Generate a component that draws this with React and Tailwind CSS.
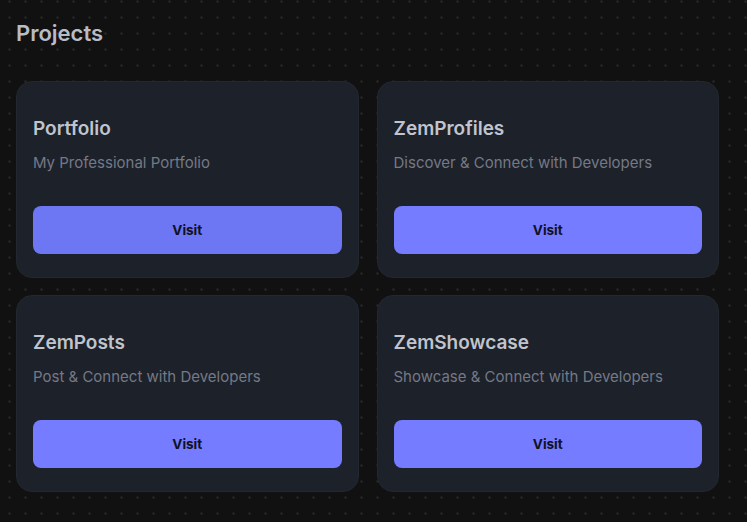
const projects = [
  { name: "Portfolio", desc: "My Professional Portfolio", hover: true },
  { name: "ZemProfiles", desc: "Discover & Connect with Developers" },
  { name: "ZemPosts", desc: "Post & Connect with Developers" },
  { name: "ZemShowcase", desc: "Showcase & Connect with Developers" },
];

export default function App() {
  return (
    <div
      className="min-h-screen w-full bg-[#111111] bg-[radial-gradient(#2c2c2c_1px,transparent_1.2px)] bg-[length:16px_16px] bg-[position:1.5px_9.5px] px-4 pt-[19px] font-['Inter',sans-serif]"
    >
      <h1 className="text-[22px] font-semibold leading-[28px] text-[#b7bcc7]">Projects</h1>
      <div className="mt-[34px] grid w-[703px] grid-cols-2 gap-x-[18px] gap-y-[17px]">
        {projects.map((p) => (
          <div
            key={p.name}
            className="flex h-[197px] flex-col rounded-2xl border border-[#23272f] bg-[#1d2129] px-4 pt-[34px]"
          >
            <h2 className="text-[19px] font-semibold leading-[26px] text-[#c0c4cd]">{p.name}</h2>
            <p className="mt-[11px] text-[15px] leading-[20px] text-[#747987]">{p.desc}</p>
            <button
              className={
                "mt-[33px] flex h-12 w-full items-center justify-center rounded-lg text-[13.5px] font-bold text-[#0f1124] " +
                (p.hover ? "bg-[#6d76f3]" : "bg-[#767cff]")
              }
            >
              Visit
            </button>
          </div>
        ))}
      </div>
    </div>
  );
}
